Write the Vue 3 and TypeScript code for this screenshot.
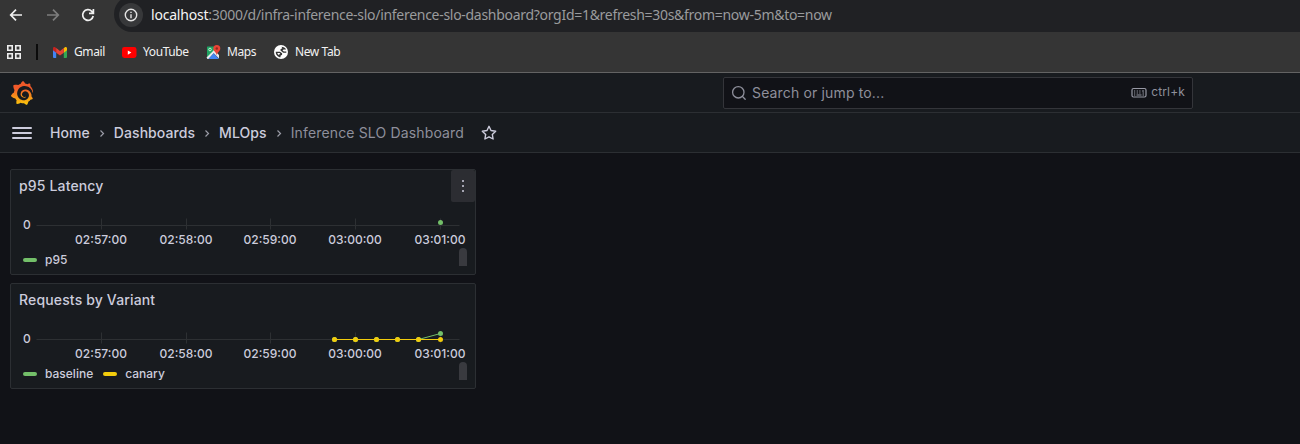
<script setup lang="ts">
interface Point { x: number; y: number }
interface Series { name: string; color: string; points: Point[] }
interface Panel { title: string; menu: boolean; series: Series[] }

const green = '#73bf69'
const yellow = '#f2cc0c'
const ticks = [
  { x: 90.5, label: '02:57:00' },
  { x: 175.5, label: '02:58:00' },
  { x: 259.5, label: '02:59:00' },
  { x: 344.5, label: '03:00:00' },
  { x: 429.5, label: '03:01:00' },
]
const xs = [323.5, 344.5, 365.5, 386.5, 407.5, 429.5]
const panels: Panel[] = [
  { title: 'p95 Latency', menu: true, series: [{ name: 'p95', color: green, points: [{ x: 429.5, y: 12.5 }] }] },
  {
    title: 'Requests by Variant',
    menu: false,
    series: [
      { name: 'baseline', color: green, points: xs.map((x, i) => ({ x, y: i === 5 ? 9.5 : 15.5 })) },
      { name: 'canary', color: yellow, points: xs.map((x) => ({ x, y: 15.5 })) },
    ],
  },
]
const crumbs = ['Home', 'Dashboards', 'MLOps']
const linePoints = (s: Series): string => s.points.map((p) => `${p.x},${p.y}`).join(' ')
</script>

<template>
  <div class="window">
    <header class="browser">
      <div class="toolbar">
        <svg class="nav back" width="14" height="14" viewBox="0 0 14 14"><path d="M13 7H2M7 1.7 1.7 7 7 12.3" /></svg>
        <svg class="nav forward" width="14" height="14" viewBox="0 0 14 14"><path d="M1 7h11M7 1.7 12.3 7 7 12.3" /></svg>
        <svg class="nav reload" width="14" height="14" viewBox="0 0 14 14"><path d="M12.2 8A5.3 5.3 0 1 1 10.8 3.3L12.4 5M12.4 1v4.4H8" /></svg>
        <div class="address">
          <span class="info"><svg width="14" height="14" viewBox="0 0 14 14"><circle cx="7" cy="7" r="5.7" /><path d="M7 6.2v4M7 3.7v1.4" /></svg></span>
          <span class="url"><b>localhost</b>:3000/d/infra-inference-slo/inference-slo-dashboard?orgId=1&amp;refresh=30s&amp;from=now-5m&amp;to=now</span>
        </div>
      </div>
      <nav class="bookmarks">
        <svg class="apps" width="14" height="14" viewBox="0 0 14 14"><path d="M.8.8h4.4v4.4H.8zM8.8.8h4.4v4.4H8.8zM.8 8.8h4.4v4.4H.8zM8.8 8.8h4.4v4.4H8.8z" /></svg>
        <i class="separator"></i>
        <span class="bookmark gmail">
          <svg width="14" height="11" viewBox="0 0 14 11"><path fill="#4285f4" d="M0 1.500 3.200 4v7H1a1 1 0 0 1-1-1z" /><path fill="#34a853" d="M14 1.500 10.800 4v7H13a1 1 0 0 0 1-1z" /><path fill="#fbbc04" d="M10.800 1 12 .2c.9-.6 2 .1 2 1v2L10.800 5.700z" /><path fill="#c5221f" d="M0 1.300C0 .2 1.200-.3 2 .2L3.200 1v4.700L0 3.200z" /><path fill="#ea4335" d="M3.200 1 7 3.900 10.800 1v4.700L7 8.500 3.200 5.700z" /></svg>
          <span>Gmail</span>
        </span>
        <span class="bookmark youtube">
          <svg width="15" height="11" viewBox="0 0 15 11"><rect width="14.500" height="11" rx="2.400" fill="#f00" /><path fill="#fff" d="m5.800 3.500 3.600 2.100-3.600 2.100z" /></svg>
          <span>YouTube</span>
        </span>
        <span class="bookmark maps">
          <svg width="15" height="15" viewBox="0 0 15 15">
            <path fill="#1fa463" d="M1.500 1.500h8.500v4L2 13H1V2q0-.5.5-.5" />
            <path fill="#e8eaed" d="M.5 12.500 8 5l5 5v3.500l-5.300-5.200-5.200 5.700H1.500z" />
            <path fill="#4285f4" d="m2.500 14 5.200-5.700L13 14z" />
            <circle cx="4" cy="4.500" r="1.300" fill="none" stroke="#d8f2df" stroke-width=".9" />
            <path fill="#ea4335" d="M10.800 0a3.500 3.500 0 0 0-3.500 3.500c0 2.700 3.100 3.500 3.500 7 .4-3.500 3.500-4.300 3.500-7A3.500 3.500 0 0 0 10.800 0" />
            <circle cx="10.800" cy="3.500" r="1.200" fill="#96271f" />
          </svg>
          <span>Maps</span>
        </span>
        <span class="bookmark newtab">
          <svg width="14" height="14" viewBox="0 0 14 14"><circle cx="7" cy="7" r="7" fill="#fff" /><path fill="#353535" d="M7.500 1.800c2 0 3.700 1 4.600 2.600H9.700L8.500 5.200l1.300 1.200h2.500v1.400H9.200L6.500 5.600V4.200l1.800-.9zM1.700 6.700h4.200l2.200 1.600v1.500l-1.600 1v1.500C3.800 12 1.700 9.800 1.700 6.700M3.300 8.100c.3 1 1 1.800 1.800 2.200v-.8l1.200-.7-.8-.7z" /></svg>
          <span>New Tab</span>
        </span>
      </nav>
    </header>

    <div class="topbar">
      <svg class="logo" width="24" height="24" viewBox="0 0 24 24">
        <defs><linearGradient id="flame" x1="0" y1="0" x2="0" y2="1"><stop offset="0" stop-color="#f05a28" /><stop offset=".3" stop-color="#f1592a" /><stop offset="1" stop-color="#fbca0a" /></linearGradient></defs>
        <path fill="url(#flame)" d="M23.02 10.59a8.578 8.578 0 0 0-.862-3.034 8.911 8.911 0 0 0-1.789-2.445c.337-1.342-.413-2.505-.413-2.505-1.292-.08-2.113.4-2.416.62-.052-.02-.102-.044-.154-.064-.22-.089-.446-.172-.677-.247-.231-.073-.47-.14-.711-.197a9.867 9.867 0 0 0-.875-.161C14.557.753 12.94 0 12.94 0c-1.804 1.145-2.147 2.744-2.147 2.744l-.018.093c-.098.029-.2.057-.298.088-.138.042-.275.094-.413.143-.138.055-.275.107-.41.166a8.869 8.869 0 0 0-1.557.87l-.063-.029c-2.497-.955-4.716.195-4.716.195-.203 2.658.996 4.33 1.235 4.636a11.608 11.608 0 0 0-.607 2.635C1.636 12.677.953 15.014.953 15.014c1.926 2.214 4.171 2.351 4.171 2.351.003-.002.006-.002.006-.005.285.509.615.994.986 1.446.156.19.32.371.488.548-.704 2.009.099 3.68.099 3.68 2.144.08 3.553-.937 3.849-1.173a9.784 9.784 0 0 0 3.164.501h.08l.055-.003.107-.002.103-.005.003.002c1.01 1.44 2.788 1.646 2.788 1.646 1.264-1.332 1.337-2.653 1.337-2.94v-.058c0-.02-.003-.039-.003-.06.265-.187.52-.387.758-.6a7.875 7.875 0 0 0 1.415-1.7c1.43.083 2.437-.885 2.437-.885-.236-1.49-1.085-2.216-1.264-2.354l-.018-.013-.016-.013a.217.217 0 0 1-.031-.02c.008-.092.016-.18.02-.27.011-.162.016-.323.016-.48v-.253l-.005-.098-.008-.135a1.891 1.891 0 0 0-.01-.13c-.003-.042-.008-.083-.013-.125l-.016-.124-.018-.122a6.215 6.215 0 0 0-2.032-3.73 6.015 6.015 0 0 0-3.222-1.46 6.292 6.292 0 0 0-.85-.048l-.107.002h-.063l-.044.003-.104.008a4.777 4.777 0 0 0-3.335 1.695c-.332.4-.592.84-.768 1.297a4.594 4.594 0 0 0-.312 1.817l.003.091c.005.055.007.11.013.164a3.615 3.615 0 0 0 .698 1.82 3.53 3.53 0 0 0 1.827 1.282c.33.098.66.14.971.137.039 0 .078 0 .114-.002l.063-.003c.02 0 .041-.003.062-.003.034-.002.065-.007.099-.01.007 0 .018-.003.028-.003l.031-.005.06-.008a1.18 1.18 0 0 0 .112-.02c.036-.008.072-.013.109-.024a2.634 2.634 0 0 0 .914-.415c.028-.02.056-.041.085-.065a.248.248 0 0 0 .039-.35.244.244 0 0 0-.309-.06l-.078.042c-.09.044-.184.083-.283.116a2.476 2.476 0 0 1-.475.096c-.028.003-.054.006-.083.006l-.083.002c-.026 0-.054 0-.08-.002l-.102-.006h-.012l-.024.006c-.016-.003-.031-.003-.044-.006-.031-.002-.06-.007-.091-.01a2.59 2.59 0 0 1-.724-.213 2.557 2.557 0 0 1-.667-.438 2.52 2.52 0 0 1-.805-1.475 2.306 2.306 0 0 1-.029-.444l.006-.122v-.023l.002-.031c.003-.021.003-.04.005-.06a3.163 3.163 0 0 1 1.352-2.29 3.12 3.12 0 0 1 .937-.43 2.946 2.946 0 0 1 .776-.101h.06l.07.002.045.003h.026l.07.005a4.041 4.041 0 0 1 1.635.49 3.94 3.94 0 0 1 1.602 1.662 3.77 3.77 0 0 1 .397 1.414l.005.076.003.075c.002.026.002.05.002.075 0 .024.003.052 0 .07v.065l-.002.073-.008.174a6.195 6.195 0 0 1-.08.639 5.1 5.1 0 0 1-.267.927 5.31 5.31 0 0 1-.624 1.13 5.052 5.052 0 0 1-3.237 2.014 4.82 4.82 0 0 1-.649.066l-.039.003h-.287a6.607 6.607 0 0 1-1.716-.265 6.776 6.776 0 0 1-3.4-2.274 6.75 6.75 0 0 1-.746-1.15 6.616 6.616 0 0 1-.714-2.596l-.005-.083-.002-.02v-.056l-.003-.073v-.096l-.003-.104v-.07l.003-.163c.008-.22.026-.45.054-.678a8.707 8.707 0 0 1 .28-1.355c.128-.444.286-.872.473-1.277a7.04 7.04 0 0 1 1.456-2.1 5.925 5.925 0 0 1 .953-.763c.169-.111.343-.213.524-.306.089-.05.182-.091.273-.135.047-.02.093-.042.138-.062a7.177 7.177 0 0 1 .714-.267l.145-.045c.049-.015.098-.026.148-.041.098-.029.197-.052.296-.076.049-.013.1-.02.15-.033l.15-.032.151-.028.076-.013.075-.01.153-.024c.057-.01.114-.013.171-.023l.169-.021c.036-.003.073-.008.106-.01l.073-.008.036-.003.042-.002c.057-.003.114-.008.171-.01l.086-.006h.023l.037-.003.145-.007a7.999 7.999 0 0 1 1.708.125 7.917 7.917 0 0 1 2.048.68 8.253 8.253 0 0 1 1.672 1.09l.09.077.089.078c.06.052.114.107.171.159.057.052.112.106.166.16.052.055.107.107.159.164a8.671 8.671 0 0 1 1.41 1.978c.012.026.028.052.04.078l.04.078.075.156c.023.051.05.1.07.153l.065.15a8.848 8.848 0 0 1 .45 1.34.19.19 0 0 0 .201.142.186.186 0 0 0 .172-.184c.01-.246.002-.532-.024-.856z" />
      </svg>
      <div class="search">
        <svg class="lens" width="16" height="16" viewBox="0 0 16 16"><circle cx="7.300" cy="7.300" r="5.700" /><path d="m11.500 11.500 2.700 2.700" /></svg>
        <span class="placeholder">Search or jump to...</span>
        <svg class="keyboard" width="16" height="12" viewBox="0 0 16 12"><rect x="1" y="1.500" width="14" height="8.500" rx="1.500" /><path d="M3 4h1.200M5.700 4h1.200M8.300 4h1.200M11 4h2M3 6h1.200M5.700 6h1.200M8.300 6h1.200M11.500 6h1.500M3 8h1.200M5.500 8h5M11.500 8h1.500" /></svg>
        <span class="shortcut">ctrl+k</span>
      </div>
    </div>

    <nav class="crumbbar">
      <span class="burger"><i></i><i></i><i></i></span>
      <template v-for="crumb in crumbs" :key="crumb">
        <span class="crumb">{{ crumb }}</span>
        <svg class="chevron" width="16" height="16" viewBox="0 0 16 16"><path d="m6.500 5.500 3 3-3 3" /></svg>
      </template>
      <span class="crumb current">Inference SLO Dashboard</span>
      <svg class="star" width="16" height="16" viewBox="0 0 16 16"><path d="m8 1.300 2 4.200 4.700.7-3.400 3.200.8 4.600L8 11.800 3.900 14l.8-4.600-3.400-3.200 4.700-.7z" /></svg>
    </nav>

    <main class="dashboard">
      <section v-for="panel in panels" :key="panel.title" class="panel">
        <div class="panel-head">
          <h2>{{ panel.title }}</h2>
          <button v-if="panel.menu" class="menu" aria-label="Menu"><i></i><i></i><i></i></button>
        </div>
        <svg class="plot" width="464" height="39" viewBox="0 0 464 39">
          <path class="grid" d="M25.500 15.500h423" />
          <path v-for="tick in ticks" :key="tick.label" class="grid" :d="`M${tick.x} 8.500v11`" />
          <g v-for="s in panel.series" :key="s.name">
            <polyline :points="linePoints(s)" fill="none" :stroke="s.color" />
            <circle v-for="p in s.points" :key="p.x" :cx="p.x" :cy="p.y" r="2.500" :fill="s.color" />
          </g>
          <text x="12" y="19">0</text>
          <text v-for="tick in ticks" :key="tick.x" :x="tick.x - 0.500" y="34" text-anchor="middle">{{ tick.label }}</text>
        </svg>
        <div class="legend">
          <span v-for="s in panel.series" :key="s.name" class="entry"><i :style="{ background: s.color }"></i><span class="name">{{ s.name }}</span></span>
          <i class="scroll"></i>
        </div>
      </section>
    </main>
  </div>
</template>

<style>
body { margin: 0; background: #111217; }
</style>

<style scoped>
* { box-sizing: border-box; }
.window { width: 1300px; height: 444px; overflow: hidden; background: #111217; color: #ccccdc; font-family: Inter, sans-serif; }
svg { display: block; flex: none; }
.browser { height: 73px; background: #353535; border-bottom: 1px solid #636363; font-family: "Noto Sans", "Open Sans", sans-serif; overflow: hidden; }
.toolbar { display: flex; height: 32px; align-items: center; padding-left: 9px; }
.nav { fill: none; stroke: #f0f0f0; stroke-width: 1.700; margin-top: -2px; }
.toolbar .forward { margin-left: 23px; stroke: #7d7d7d; }
.reload { margin-left: 21px; }
.address { display: flex; align-items: center; flex: 1; height: 36px; margin: -4px -30px 0 19px; padding-left: 5px; border-radius: 18px; background: #202124; }
.info { display: grid; place-items: center; width: 24px; height: 24px; border-radius: 50%; background: #37383a; margin-top: 2px; }
.info svg { fill: none; stroke: #e4e4e4; stroke-width: 1.400; }
.url { margin: 2px 0 0 8px; font-size: 14px; line-height: 20px; color: #9a9b9d; white-space: nowrap; letter-spacing: -.29px; }
.url b { font-weight: 400; color: #f5f5f5; letter-spacing: -.2px; }
.bookmarks { display: flex; align-items: center; height: 40px; padding-left: 7px; color: #f2f2f2; font-size: 12px; line-height: 16px; letter-spacing: -.4px; }
.apps { fill: none; stroke: #eee; stroke-width: 1.600; }
.separator { width: 2px; height: 16px; margin-left: 15px; background: #0b0b0b; }
.bookmark { display: flex; align-items: center; white-space: nowrap; }
.gmail { width: 69px; margin-left: 15px; gap: 7px; }
.youtube { width: 84px; gap: 6px; }
.maps { width: 68px; gap: 6px; }
.newtab { gap: 7px; }
.topbar { display: flex; align-items: center; height: 40px; background: #181b1f; border-bottom: 1px solid #2c2f33; padding-left: 10px; }
.logo { margin-top: 1px; }
.search { display: flex; align-items: center; width: 470px; height: 32px; margin-left: 689px; padding: 0 7px; border: 1px solid #34353a; border-radius: 2px; background: #111217; color: #8e8f9b; }
.lens { fill: none; stroke: #8e8f9b; stroke-width: 1.300; stroke-linecap: round; }
.placeholder { margin-left: 5px; font-size: 14px; letter-spacing: .15px; flex: 1; }
.keyboard { fill: none; stroke: #9899a5; stroke-width: 1.200; }
.keyboard path { stroke-width: 1.100; }
.shortcut { margin: -3px 0 0 4px; font-size: 12px; letter-spacing: .15px; }
.crumbbar { display: flex; align-items: center; height: 40px; background: #181b1f; border-bottom: 1px solid #2c2f33; padding-left: 12px; font-size: 14px; font-weight: 500; white-space: nowrap; }
.burger { display: flex; flex-direction: column; gap: 3px; width: 20px; margin-right: 18px; }
.burger i { height: 2px; border-radius: 1px; background: #ccccdc; }
.crumb { letter-spacing: .07px; }
.chevron { margin: 0 4px; fill: none; stroke: #9b9ca7; stroke-width: 1.200; }
.current { color: #8e8f9b; font-weight: 400; letter-spacing: .15px; }
.star { margin-left: 17px; fill: none; stroke: #ccccdc; stroke-width: 1.400; stroke-linejoin: round; }
.dashboard { display: flex; flex-direction: column; gap: 8px; padding: 16px 10px; }
.panel { width: 466px; height: 106px; border: 1px solid #2c2f33; border-radius: 2px; background: #181b1f; }
.panel-head { display: flex; height: 41px; justify-content: space-between; }
h2 { margin: 0; padding-left: 8px; font-size: 14px; line-height: 32px; font-weight: 500; letter-spacing: .15px; }
.menu { display: flex; flex-direction: column; align-items: center; justify-content: center; gap: 3px; width: 24px; height: 32px; padding: 0; border: 0; border-radius: 2px; background: #2c2d32; }
.menu i { width: 2px; height: 2px; background: #a5a5b2; }
.grid { stroke: #2d3033; fill: none; }
text { fill: #ccccdc; font-size: 12px; font-weight: 500; }
.legend { display: flex; align-items: center; height: 18px; margin-top: 2px; padding: 0 8px 0 12px; font-size: 12px; font-weight: 500; }
.plot { margin-top: -1px; }
.entry { display: flex; align-items: center; margin-right: 10px; }
.entry i { width: 14px; height: 4px; margin-right: 8px; border-radius: 2px; }
.name { line-height: 16px; }
.scroll { width: 8px; height: 18px; margin-left: auto; border-radius: 4px 4px 0 0; background: #393a3f; align-self: flex-start; margin-top: -3px; }
</style>
